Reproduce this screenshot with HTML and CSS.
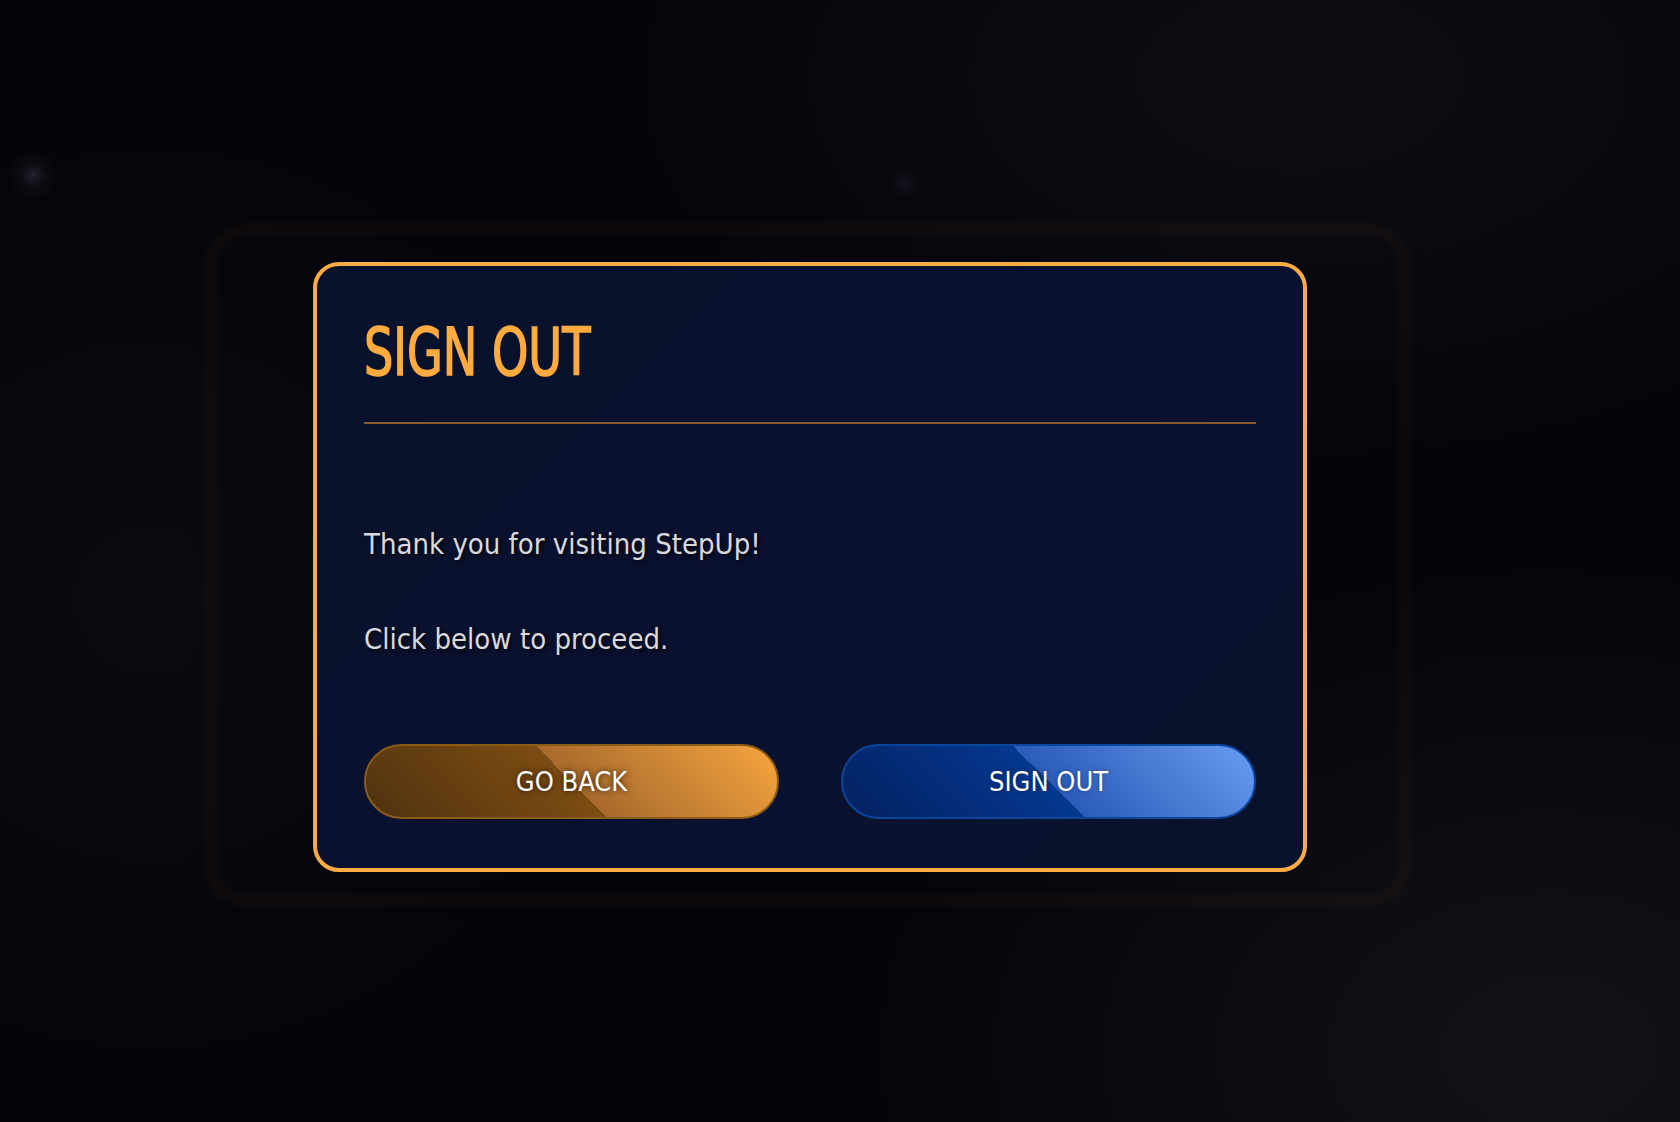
FILE: index.html
```html
<!DOCTYPE html>
<html lang="en">
<head>
<meta charset="utf-8">
<title>Sign Out - StepUp</title>
<link rel="stylesheet" href="styles.css">
</head>
<body>
<main class="stage">
  <section class="card">
    <h1 class="title"><span class="title-text">SIGN OUT</span></h1>
    <hr class="divider">
    <p class="msg msg-first">Thank you for visiting StepUp!</p>
    <p class="msg msg-second">Click below to proceed.</p>
    <div class="actions">
      <button class="btn btn-back" type="button">GO BACK</button>
      <button class="btn btn-out" type="button">SIGN OUT</button>
    </div>
  </section>
</main>
</body>
</html>
```

FILE: styles.css
```css
html, body {
  margin: 0;
  padding: 0;
  height: 100%;
}

body {
  background:
    radial-gradient(circle at 33px 175px, rgba(70, 72, 82, 0.45) 0, rgba(40, 42, 50, 0.2) 12px, rgba(0, 0, 0, 0) 26px),
    radial-gradient(circle at 905px 183px, rgba(40, 42, 55, 0.35) 0, rgba(0, 0, 0, 0) 14px),
    radial-gradient(ellipse 700px 500px at 1550px 1050px, rgba(24, 24, 30, 0.7), rgba(0, 0, 0, 0)),
    radial-gradient(ellipse 700px 400px at 1300px 80px, rgba(20, 20, 28, 0.6), rgba(0, 0, 0, 0)),
    radial-gradient(ellipse 500px 500px at 150px 600px, rgba(14, 14, 22, 0.6), rgba(0, 0, 0, 0)),
    #04040a;
  font-family: "DejaVu Sans Condensed", "DejaVu Sans", sans-serif;
  font-stretch: condensed;
  overflow: hidden;
}

.stage {
  height: 100%;
  display: flex;
  align-items: center;
  justify-content: center;
}

.card {
  position: relative;
  box-sizing: border-box;
  width: 994px;
  margin-right: 60px;
  margin-top: 11px;
  padding: 54px 47px 49px;
  border: 4px solid #ffab45;
  border-radius: 26px;
  background: linear-gradient(135deg, #08122a 0%, #0a1130 45%, #0a1230 70%, #08122a 100%);
}

.card::before {
  content: "";
  position: absolute;
  top: -39px;
  bottom: -35px;
  left: -109px;
  right: -105px;
  border: 5px solid rgba(255, 150, 30, 0.10);
  border-radius: 38px;
  filter: blur(6px);
  pointer-events: none;
}

.title {
  margin: 0;
  height: 66px;
  font-size: 66px;
  line-height: 66px;
  font-weight: 400;
  color: #ffab40;
  white-space: nowrap;
}

.title-text {
  display: inline-block;
  transform: scaleX(0.778);
  transform-origin: left center;
  -webkit-text-stroke: 1.6px #ffab40;
}

.divider {
  margin: 36px 0 0;
  border: 0;
  height: 2px;
  background: #8c5b2c;
}

.msg {
  margin: 0;
  font-size: 29px;
  line-height: 36px;
  color: #d9d9dc;
  text-shadow: 2px 2px 4px rgba(0, 0, 0, 0.75);
}

.msg-first {
  margin-top: 102px;
}

.msg-second {
  margin-top: 59px;
}

.actions {
  margin-top: 87px;
  display: grid;
  grid-template-columns: 1fr 1fr;
  column-gap: 62px;
}

.btn {
  box-sizing: border-box;
  height: 75px;
  border-radius: 38px;
  border: 2px solid;
  font-family: "DejaVu Sans Condensed", "DejaVu Sans", sans-serif;
  font-stretch: condensed;
  font-size: 27px;
  color: #ffffff;
  padding: 0;
  cursor: pointer;
  text-shadow: 0 0 6px rgba(0, 0, 0, 0.75);
}

.btn-back {
  border-color: #8a5c16;
  background: linear-gradient(45deg, #4f3210 0%, #7c4c12 50%, #a86a2c 50%, #f7a640 100%);
}

.btn-out {
  border-color: #0c469c;
  background: linear-gradient(45deg, #03205f 0%, #053890 50%, #2a5cb8 50%, #6a9cf4 100%);
  text-shadow: 0 0 4px rgba(0, 0, 0, 0.35);
}
```
